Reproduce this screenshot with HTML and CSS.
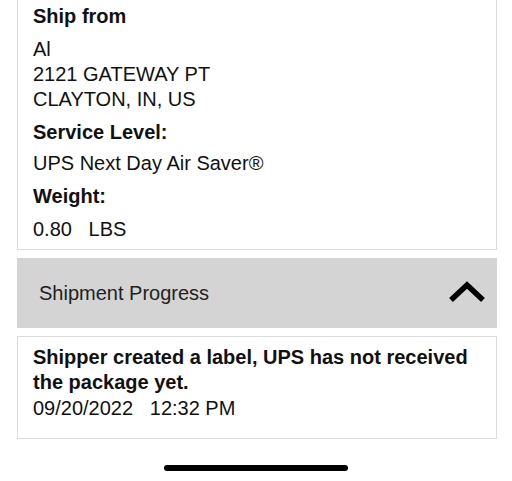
FILE: index.html
```html
<!DOCTYPE html>
<html>
<head>
<meta charset="utf-8">
<link rel="stylesheet" href="styles.css">
</head>
<body>
<div class="page">
  <section class="card details">
    <div class="label">Ship from</div>
    <div class="value">Al<br>2121 GATEWAY PT<br>CLAYTON, IN, US</div>
    <div class="label">Service Level:</div>
    <div class="value tight">UPS Next Day Air Saver®</div>
    <div class="label">Weight:</div>
    <div class="value">0.80&nbsp;&nbsp;&nbsp;LBS</div>
  </section>
  <div class="accordion">
    <span class="acc-title">Shipment Progress</span>
    <svg class="chevron" width="38" height="24" viewBox="0 0 38 24"><path d="M3 20 L19 5 L35 20" fill="none" stroke="#000" stroke-width="5.5" stroke-linejoin="miter"/></svg>
  </div>
  <section class="card progress">
    <div class="event">Shipper created a label, UPS has not received the package yet.</div>
    <div class="when">09/20/2022&nbsp;&nbsp;&nbsp;12:32 PM</div>
  </section>
  <div class="home-bar"></div>
</div>
</body>
</html>
```
FILE: styles.css
```css
html, body {
  margin: 0;
  padding: 0;
  background: #fff;
}
body {
  font-family: "Liberation Sans", Arial, sans-serif;
  font-size: 20px;
  line-height: 25px;
  color: #111;
}
.page {
  width: 512px;
  height: 481px;
  overflow: hidden;
  display: flex;
  flex-direction: column;
}
.card {
  margin: 0 15px 0 17px;
  border: 1px solid #dcdcdc;
  padding: 0 15px;
}
.details {
  border-top: none;
  padding-top: 4px;
  padding-bottom: 7px;
  display: flex;
  flex-direction: column;
  gap: 8px;
}
.details .tight {
  margin-top: -2px;
}
.label {
  font-weight: bold;
}
.accordion {
  margin: 8px 15px 0 17px;
  height: 70px;
  background: #d4d4d4;
  display: flex;
  align-items: center;
  justify-content: space-between;
  padding: 0 11px 0 22px;
}
.acc-title {
  color: #222;
}
.chevron {
  display: block;
  margin-bottom: 2px;
}
.progress {
  margin-top: 8px;
  padding-top: 8px;
  padding-bottom: 17px;
}
.event {
  font-weight: bold;
}
.when {
  margin-top: 1px;
}
.home-bar {
  margin: 26px auto 0;
  width: 184px;
  height: 6px;
  border-radius: 3px;
  background: #000;
}
```
